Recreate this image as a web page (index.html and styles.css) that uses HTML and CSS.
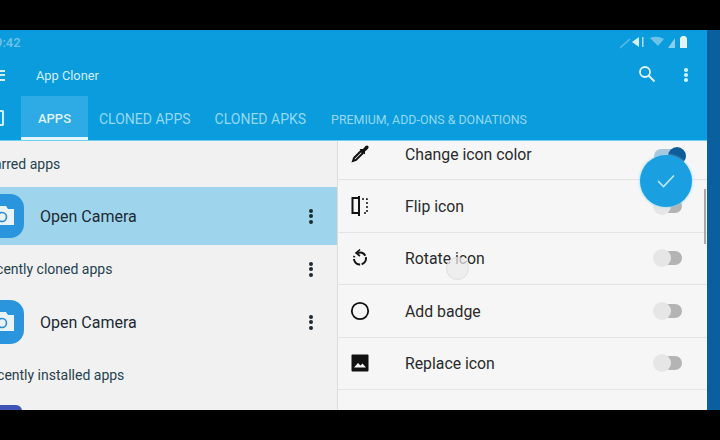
FILE: index.html
```html
<!DOCTYPE html>
<html lang="en">
<head>
<meta charset="utf-8">
<title>App Cloner</title>
<link rel="stylesheet" href="styles.css">
</head>
<body>
<div class="bar-black top"></div>
<div class="screen">
  <div class="app">
    <header class="header">
      <div class="status">
        <span class="time">9:42</span>
        <svg class="status-icons" width="68" height="14" viewBox="0 0 68 14">
          <path d="M0 13 L10 4" stroke="#5dbbe6" stroke-width="1.5"/>
          <path d="M12 7 L19 2 V12 Z" fill="#d5eef9"/>
          <rect x="22" y="2" width="1.5" height="10" fill="#a9dcf3"/>
          <path d="M30 3 Q37 0 44 4 L38 11 Z" fill="#6cc2e9"/>
          <path d="M48 13 L55 3 V13 Z" fill="#8bcfee"/>
          <path d="M60 3 L62 1 H65 L67 3 V13 H60 Z" fill="#e2f3fb"/>
        </svg>
      </div>
      <div class="toolbar">
        <div class="menu"><i></i><i></i><i></i></div>
        <span class="title">App Cloner</span>
        <svg class="search" width="18" height="18" viewBox="0 0 18 18" fill="none" stroke="#e4f5fc" stroke-width="1.8">
          <circle cx="7" cy="7" r="5"/>
          <path d="M10.5 10.5 L16.5 16.5"/>
        </svg>
        <div class="dots light"><i></i><i></i><i></i></div>
      </div>
      <nav class="tabs">
        <div class="tab-edge"></div>
        <div class="tab active">APPS</div>
        <div class="tab t2">CLONED APPS</div>
        <div class="tab t3">CLONED APKS</div>
        <div class="tab t4">PREMIUM, ADD-ONS &amp; DONATIONS</div>
      </nav>
    </header>
    <div class="body">
      <section class="left">
        <div class="section s1"><span class="clip c1">Starred apps</span></div>
        <div class="row selected">
          <div class="app-icon"><svg width="26" height="22" viewBox="0 0 26 22"><path d="M1 4 H7 L9 1 H17 L19 4 H25 V20 H1 Z" fill="#e8f3fa"/><circle cx="13" cy="12" r="4.5" fill="none" stroke="#2a8ed6" stroke-width="1.6"/></svg></div>
          <span class="app-name">Open Camera</span>
          <div class="dots"><i></i><i></i><i></i></div>
        </div>
        <div class="section s2"><span class="clip c2">Recently cloned apps</span><div class="dots"><i></i><i></i><i></i></div></div>
        <div class="row plain">
          <div class="app-icon"><svg width="26" height="22" viewBox="0 0 26 22"><path d="M1 4 H7 L9 1 H17 L19 4 H25 V20 H1 Z" fill="#e8f3fa"/><circle cx="13" cy="12" r="4.5" fill="none" stroke="#2a8ed6" stroke-width="1.6"/></svg></div>
          <span class="app-name">Open Camera</span>
          <div class="dots"><i></i><i></i><i></i></div>
        </div>
        <div class="section s3"><span class="clip c3">Recently installed apps</span></div>
        <div class="next-icon"></div>
      </section>
      <section class="right">
        <div class="opt first">
          <svg class="opt-icon" width="20" height="20" viewBox="0 0 20 20"><path d="M4 14 L11 7 L13 9 L6 16 L3 17 Z" fill="none" stroke="#111" stroke-width="2"/><path d="M9.5 5 L13 5 L15.5 2 Q17 1 18.3 2 Q19.2 3.5 17.8 5 L15 7.5 L15 10.5 Z" fill="#111"/></svg>
          <span class="opt-label">Change icon color</span>
          <div class="switch on"><b></b></div>
        </div>
        <div class="opt">
          <svg class="opt-icon" width="20" height="20" viewBox="0 0 20 20" fill="none" stroke="#111"><path d="M9 2 H2.5 V17 H9 M9 0 V20" stroke-width="2"/><path d="M12 3 H17 V17 H12" stroke-width="1.5" stroke-dasharray="2 2"/></svg>
          <span class="opt-label">Flip icon</span>
          <div class="switch"></div>
        </div>
        <div class="opt">
          <svg class="opt-icon" width="20" height="20" viewBox="0 0 20 20" fill="none" stroke="#111" stroke-width="2"><path d="M7.5 5 A6 6 0 1 1 4.5 8" stroke-dasharray="9 1.5"/><path d="M10 1.5 L6 5 L10 8" stroke-width="1.6"/></svg>
          <span class="opt-label">Rotate icon</span>
          <div class="switch"></div>
        </div>
        <div class="opt">
          <svg class="opt-icon" width="20" height="20" viewBox="0 0 20 20" fill="none" stroke="#111" stroke-width="1.8"><circle cx="10" cy="10" r="8.2"/></svg>
          <span class="opt-label">Add badge</span>
          <div class="switch"></div>
        </div>
        <div class="opt">
          <svg class="opt-icon" width="20" height="20" viewBox="0 0 20 20"><rect x="1.5" y="1.5" width="17" height="17" rx="1" fill="#111"/><path d="M4 14.5 L8 10 L10.5 12.5 L12.5 10.5 L16 14.5 Z" fill="#f5f5f5"/></svg>
          <span class="opt-label">Replace icon</span>
          <div class="switch"></div>
        </div>
        <div class="scrollbar"></div>
        <div class="touch"></div>
      </section>
    </div>
    <div class="fab"><svg width="20" height="16" viewBox="0 0 20 16" fill="none" stroke="#bfe8f8" stroke-width="1.6"><path d="M2 8 L7.5 13.5 L18 2.5"/></svg></div>
  </div>
  <div class="strip"></div>
</div>
<div class="bar-black bottom"></div>
</body>
</html>
```

FILE: styles.css
```css
* { box-sizing: border-box; }
html, body { margin: 0; padding: 0; }
body {
  width: 720px;
  height: 440px;
  overflow: hidden;
  background: #000;
  font-family: Roboto, "Liberation Sans", sans-serif;
  display: flex;
  flex-direction: column;
}
.bar-black { flex: none; height: 30px; background: #000; }
.screen { flex: none; height: 380px; display: flex; }
.app { position: relative; width: 707px; flex: none; display: flex; flex-direction: column; overflow: hidden; }
.strip { flex: 1; background: #0a5f9f; }

.header { flex: none; height: 111px; background: #0a9cdc; display: flex; flex-direction: column; border-bottom: 1px solid #6fd0f2; }
.status { height: 24px; display: flex; align-items: center; justify-content: space-between; padding-right: 19px; }
.time { margin-left: -5px; font-size: 13px; font-weight: 500; color: #6fc3ea; }
.status-icons { display: block; }

.toolbar { height: 42px; display: flex; align-items: center; }
.menu { width: 5px; height: 11px; margin-right: 31px; display: flex; flex-direction: column; justify-content: space-between; }
.menu i { display: block; height: 2px; background: #d6f0fb; }
.title { font-size: 12.8px; color: #d3eefa; flex: 1; }
.search { margin-right: 28px; margin-top: -3px; }
.dots { display: flex; flex-direction: column; gap: 1.5px; width: 4px; flex: none; }
.dots i { display: block; width: 4px; height: 4px; border-radius: 50%; background: #1d2a33; }
.dots.light { margin-right: 19px; }
.dots.light i { background: #cdeefa; width: 3.5px; height: 3.5px; }

.tabs { flex: 1; display: flex; align-items: stretch; font-size: 14px; color: #94d8f5; white-space: nowrap; }
.tab-edge { width: 4px; margin: 14px 17px 14px 0; border: 2px solid #cdeefa; border-left: 0; border-radius: 0 2px 2px 0; }
.tab { display: flex; align-items: center; padding-top: 2px; }
.tab.active { width: 67px; justify-content: center; padding-top: 3px; background: #2eaae4; color: #dff4fc; font-weight: 500; font-size: 13px; border-bottom: 3px solid #e2f6fc; }
.t2 { margin-left: 11px; }
.t3 { margin-left: 24px; }
.t4 { margin-left: 25px; font-size: 12.4px; }

.body { flex: 1; display: flex; min-height: 0; }
.left { width: 338px; flex: none; background: #f1f1f1; border-right: 1px solid #dcdcdc; overflow: hidden; color: #26414f; }
.right { position: relative; flex: 1; background: #f6f6f6; overflow: hidden; }

.section { display: flex; align-items: center; justify-content: space-between; padding-right: 24px; font-size: 14px; }
.s1 { height: 46px; }
.s2 { height: 48px; }
.s3 { height: 54px; padding-bottom: 6px; }
.clip { white-space: nowrap; }
.c1 { margin-left: -19px; }
.c2 { margin-left: -20px; }
.c3 { margin-left: -19px; }

.row { display: flex; align-items: center; padding-right: 24px; }
.selected { height: 58px; background: #9fd5ec; }
.plain { height: 58px; }
.app-icon { width: 24px; height: 44px; margin-right: 16px; flex: none; background: #2a94dc; border-radius: 0 14px 14px 0; display: flex; align-items: center; justify-content: flex-end; padding-right: 9px; overflow: hidden; }
.app-icon svg { flex: none; }
.app-name { flex: 1; font-size: 16px; color: #1b2a35; }
.next-icon { width: 22px; height: 6px; background: #3f55b5; border-radius: 0 14px 0 0; }

.opt { height: 52.5px; display: flex; align-items: center; padding-left: 12px; padding-right: 25px; border-bottom: 1px solid #e4e4e4; }
.opt.first { height: 39px; align-items: flex-start; padding-top: 3px; }
.opt-icon { flex: none; margin-right: 35px; }
.opt-label { flex: 1; font-size: 15.8px; color: #2a2a2a; padding-top: 1px; }
.switch { position: relative; width: 28px; height: 14px; border-radius: 7px; background: #b4b4b4; }
.switch::before { content: ""; position: absolute; left: -1px; top: -2px; width: 18px; height: 18px; border-radius: 50%; background: #e6e6e6; }
.switch.on { background: #a9c8e0; margin-top: 5px; }
.switch.on::before { display: none; }
.switch.on b { position: absolute; right: -4px; top: -2px; width: 18px; height: 18px; border-radius: 50%; background: #0e5c98; }

.scrollbar { position: absolute; right: 1px; top: 48px; width: 2px; height: 55px; background: #a9a9a9; }
.touch { position: absolute; left: 108px; top: 116px; width: 23px; height: 23px; border-radius: 50%; background: rgba(235,235,235,.7); border: 1px solid #dedede; }
.fab { position: absolute; left: 640px; top: 125px; width: 52px; height: 52px; border-radius: 50%; background: #1a9fe0; display: flex; align-items: center; justify-content: center; box-shadow: 0 0 3px #7fd4f4; }
```
